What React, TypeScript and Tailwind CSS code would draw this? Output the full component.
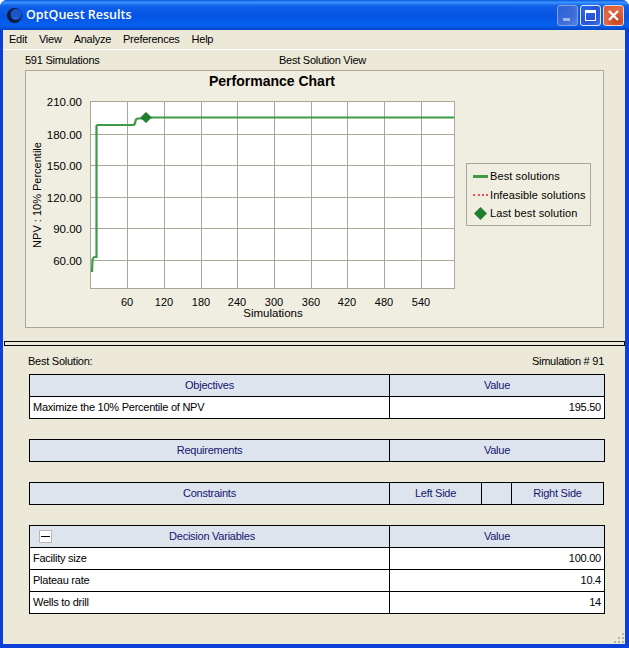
const ui = { fontFamily: '"Liberation Sans", Arial, sans-serif' }

const xTicks = [60, 120, 180, 240, 300, 360, 420, 480, 540]
const xGrid = [37, 74, 111, 147, 184, 221, 257, 294, 331]
const yTicks = [
  { label: '210.00', y: 1 },
  { label: '180.00', y: 34 },
  { label: '150.00', y: 65 },
  { label: '120.00', y: 97 },
  { label: '90.00', y: 128 },
  { label: '60.00', y: 160 },
]

function WinButton({ kind }: { kind: 'min' | 'max' | 'close' }) {
  const tone =
    kind === 'close'
      ? 'border-[#e8d8d0] bg-[radial-gradient(circle_at_70%_75%,#c8421e,#e06a45_60%,#d9532e)]'
      : kind === 'max'
        ? 'border-[#dfe8fb] bg-[radial-gradient(circle_at_25%_25%,#2b66e8,#2452d8_55%,#3f74ee)]'
        : 'border-[#7f9fe4] bg-[radial-gradient(circle_at_25%_25%,#2f63d8,#3c6bd8_55%,#5a84e4)]'
  return (
    <div className={`w-[21px] h-[21px] rounded-[3px] border flex items-center justify-center ${tone}`}>
      <svg width="13" height="13" viewBox="0 0 13 13">
        {kind === 'min' && <rect x="2" y="9" width="7" height="3" fill="#9fb4e8" />}
        {kind === 'max' && (
          <>
            <rect x="1.5" y="1.5" width="10" height="10" fill="none" stroke="#fff" />
            <rect x="1" y="1" width="11" height="3" fill="#fff" />
          </>
        )}
        {kind === 'close' && <path d="M2 2 L11 11 M11 2 L2 11" stroke="#fff" strokeWidth="2.4" />}
      </svg>
    </div>
  )
}

function Chart() {
  return (
    <svg width="440" height="229" viewBox="0 -5 440 229" className="shrink-0 -ml-px" style={ui}>
      <rect x="65.5" y="1.5" width="364" height="187" fill="#fff" stroke="#a8a898" />
      <g transform="translate(65 0)" stroke="#a8a898" strokeWidth="1">
        {xGrid.map((x) => (
          <line key={x} x1={x + 0.5} y1="1" x2={x + 0.5} y2="188" />
        ))}
        {yTicks.slice(1).map((t) => (
          <line key={t.y} x1="0" y1={t.y + 0.5} x2="364" y2={t.y + 0.5} />
        ))}
      </g>
      <path
        d="M67 172 L67.5 160 Q68 157 70 157 L71.5 157 L71.5 25.5 Q71.5 25 73 25 L108 25 Q110 25 110.5 21 Q111 18.5 113 18.5 L121 18.5 L121 17.5 L429 17.5"
        fill="none"
        stroke="#3f9a45"
        strokeWidth="2.2"
      />
      <path d="M121 12.5 L126 17.5 L121 22.5 L116 17.5 Z" fill="#1f7f2c" stroke="#17661f" />
      <g fontSize="11" fill="#000">
        {yTicks.map((t) => (
          <text key={t.label} x="57" y={t.y + 5} textAnchor="end" fontSize="11.5">
            {t.label}
          </text>
        ))}
        {xTicks.map((t, i) => (
          <text key={t} x={65 + xGrid[i]} y="206" textAnchor="middle">
            {t}
          </text>
        ))}
        <text x="248" y="217" textAnchor="middle" fontSize="11.5">
          Simulations
        </text>
        <text transform="translate(16 95) rotate(-90)" textAnchor="middle">
          NPV : 10% Percentile
        </text>
      </g>
    </svg>
  )
}

function Legend() {
  return (
    <div className="w-[125px] h-[63px] mt-[68px] ml-px border border-[#aca899] flex flex-col justify-between py-[3px] text-[11px] tracking-[0.1px] leading-[18px] text-black">
      <div className="flex items-center pl-[6px]">
        <span className="w-[15px] h-[3px] bg-[#3f9a45] mr-[2px]" />
        Best solutions
      </div>
      <div className="flex items-center pl-[6px]">
        <span className="w-[15px] h-0 border-t-2 border-dotted border-[#f05050] mr-[2px]" />
        Infeasible solutions
      </div>
      <div className="flex items-center pl-[6px]">
        <svg width="15" height="15" viewBox="0 0 15 15" className="mr-[2px]">
          <path d="M7.5 1 L14 7.5 L7.5 14 L1 7.5 Z" fill="#1f7f2c" />
        </svg>
        Last best solution
      </div>
    </div>
  )
}

function Cell({ head, right, center, className, children }: { head?: boolean; right?: boolean; center?: boolean; className?: string; children?: React.ReactNode }) {
  return (
    <div
      className={`h-[21px] px-[3px] flex items-center ${head ? 'bg-[#dee4ee] text-[#14146e]' : 'bg-white text-black'} ${right ? 'justify-end' : ''} ${center ? 'justify-center' : ''} ${className ?? ''}`}
    >
      {children}
    </div>
  )
}

const twoCols = 'grid grid-cols-[359px_214px] gap-px bg-black border border-black w-[576px]'

export default function App() {
  return (
    <div className="w-[629px] h-[648px] bg-white" style={ui}>
      <div className="h-full rounded-t-[7px] overflow-hidden flex flex-col bg-[#0a3fd8]">
        {/* Title bar */}
        <div className="h-[30px] shrink-0 flex items-center pl-[6px] pr-[5px] bg-[linear-gradient(180deg,#0a5ae0_0%,#3a93ff_8%,#0f5fe8_20%,#0555e4_55%,#0760ee_85%,#0645c8_100%)]">
          <svg width="17" height="17" viewBox="0 0 17 17" className="mr-[3px]">
            <circle cx="8.5" cy="8.5" r="7.5" fill="#0a1a3c" />
            <circle cx="10" cy="7.5" r="5.5" fill="#1a55c8" />
            <path d="M7 10 A4 4 0 0 0 12 10.5 A5 5 0 0 1 7 10 Z" fill="#a8c4f0" />
          </svg>
          <span
            className="text-[12.5px] font-semibold text-white"
            style={{ fontFamily: '"Open Sans", sans-serif' }}
          >
            OptQuest Results
          </span>
          <div className="ml-auto flex gap-[2px]">
            <WinButton kind="min" />
            <WinButton kind="max" />
            <WinButton kind="close" />
          </div>
        </div>

        {/* Body */}
        <div className="flex-1 ml-[3px] mr-[4px] mb-[4px] bg-[repeating-conic-gradient(#eeebdc_0_25%,#e9e6d4_0_50%)] bg-[length:2px_2px] flex flex-col text-[11px] tracking-[-0.25px] text-black">
          <div className="h-[19px] shrink-0 flex items-center pl-[6px] gap-[12px]">
            <span>Edit</span>
            <span>View</span>
            <span>Analyze</span>
            <span>Preferences</span>
            <span>Help</span>
          </div>
          <div className="h-px shrink-0 bg-white" />

          <div className="h-[20px] shrink-0 pl-[22px] flex items-center">
            <span className="w-[254px]">591 Simulations</span>
            <span>Best Solution View</span>
          </div>

          <div className="ml-[22px] w-[579px] h-[258px] shrink-0 border border-[#aca899] bg-[#f0eee1] tracking-normal">
            <div className="h-[20px] w-[492px] flex items-center justify-center font-bold text-[14px] leading-none">
              Performance Chart
            </div>
            <div className="flex mt-[4px]">
              <Chart />
              <Legend />
            </div>
          </div>

          <div className="h-[5px] mt-[13px] ml-px shrink-0 border border-black" />

          <div className="h-[28px] shrink-0 pt-[3px] ml-[25px] mr-[21px] flex items-center justify-between">
            <span>Best Solution:</span>
            <span>Simulation # 91</span>
          </div>

          <div className="ml-[26px] flex flex-col">
            <div className={twoCols}>
              <Cell head center>Objectives</Cell>
              <Cell head center>Value</Cell>
              <Cell>Maximize the 10% Percentile of NPV</Cell>
              <Cell right>195.50</Cell>
            </div>

            <div className={`${twoCols} mt-[20px]`}>
              <Cell head center>Requirements</Cell>
              <Cell head center>Value</Cell>
            </div>

            <div className="grid grid-cols-[359px_91px_29px_91px] gap-px bg-black border border-black w-[575px] mt-[20px]">
              <Cell head center>Constraints</Cell>
              <Cell head center>Left Side</Cell>
              <Cell head />
              <Cell head center>Right Side</Cell>
            </div>

            <div className={`${twoCols} mt-[20px]`}>
              <Cell head center className="relative">
                <span className="absolute left-[9px] top-[4px] w-[13px] h-[13px] bg-white border border-[#b8b8b8] flex items-center justify-center">
                  <span className="w-[9px] h-px bg-black" />
                </span>
                <span className="pl-[5px]">Decision Variables</span>
              </Cell>
              <Cell head center>Value</Cell>
              <Cell>Facility size</Cell>
              <Cell right>100.00</Cell>
              <Cell>Plateau rate</Cell>
              <Cell right>10.4</Cell>
              <Cell>Wells to drill</Cell>
              <Cell right>14</Cell>
            </div>
          </div>

          <div className="relative flex-1">
            <svg width="12" height="12" viewBox="0 0 12 12" className="absolute right-0 bottom-0">
              <g fill="#b8b4a0">
                <rect x="9" y="1" width="2" height="2" />
                <rect x="5" y="5" width="2" height="2" />
                <rect x="9" y="5" width="2" height="2" />
                <rect x="1" y="9" width="2" height="2" />
                <rect x="5" y="9" width="2" height="2" />
                <rect x="9" y="9" width="2" height="2" />
              </g>
            </svg>
          </div>
        </div>
      </div>
    </div>
  )
}
